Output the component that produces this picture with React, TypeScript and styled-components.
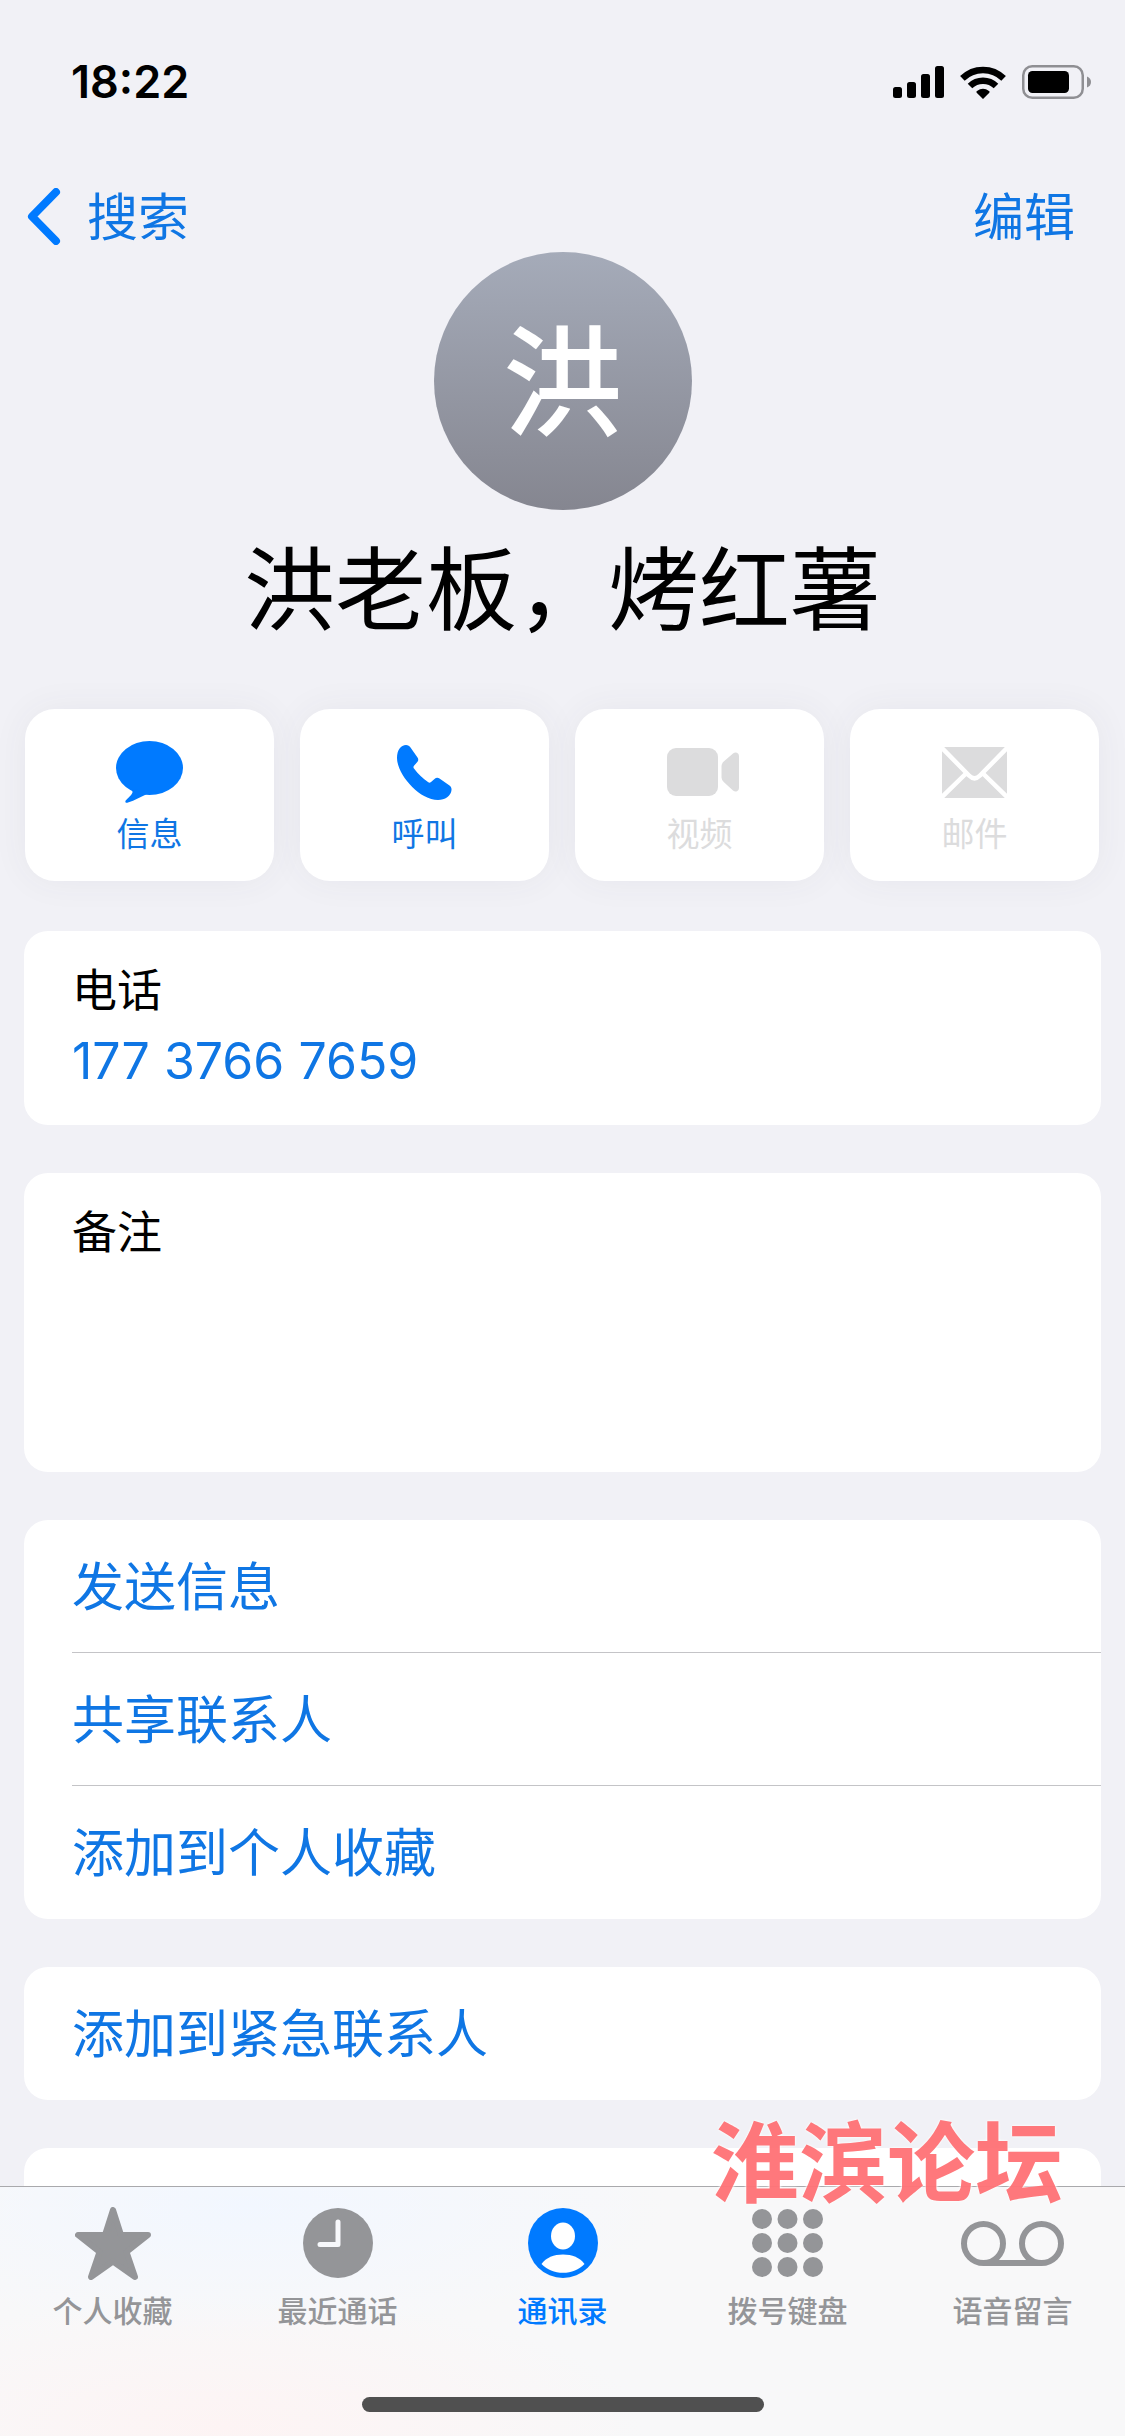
import React from "react";
import styled, { createGlobalStyle, css } from "styled-components";

const color = {
  page: "#f1f1f6",
  card: "#ffffff",
  tint: "#007aff",
  link: "#0f76e4",
  text: "#000000",
  disabled: "#dcdcdd",
  tab: "#949598",
  divider: "#c4c4c7",
};

const GlobalStyle = createGlobalStyle`
  *, *::before, *::after { box-sizing: border-box; }
  body {
    margin: 0;
    background: ${color.page};
    color: ${color.text};
    font-family: Inter, "Noto Sans CJK SC", sans-serif;
  }
  button, textarea { font: inherit; }
`;

const Screen = styled.div`
  display: flex;
  flex-direction: column;
  height: 100vh;
  overflow: hidden;
`;

const Scroller = styled.main`
  flex: 1;
  min-height: 0;
  overflow-y: auto;
  scrollbar-width: none;
`;

const StatusBar = styled.header`
  display: flex;
  align-items: center;
  justify-content: space-between;
  height: 132px;
  padding: 32px 34px 0 71px;
`;

const Clock = styled.time`
  font-size: 45px;
  font-weight: 600;
  line-height: 56px;
`;

const StatusIcons = styled.div`
  display: flex;
  align-items: center;
  gap: 16px;
`;

const NavBar = styled.nav`
  display: flex;
  justify-content: space-between;
  padding: 48px 50px 0 27px;
`;

const PlainButton = styled.button`
  padding: 0;
  border: 0;
  background: none;
  cursor: pointer;
`;

const NavButton = styled(PlainButton)`
  display: flex;
  align-items: center;
  gap: 25px;
  color: ${color.link};
  font-size: 51px;
  line-height: 68px;
`;

const NavText = styled.span`
  padding-top: 4px;
`;

const Profile = styled.section`
  display: flex;
  flex-direction: column;
  align-items: center;
  gap: 24px;
`;

const Avatar = styled.div`
  display: flex;
  justify-content: center;
  width: 258px;
  height: 258px;
  padding-top: 6px;
  border-radius: 50%;
  background: linear-gradient(#a5abb9, #858690);
  color: #fff;
  font-size: 120px;
  font-weight: 500;
  line-height: 252px;
`;

const Name = styled.h1`
  margin: 0;
  font-size: 91px;
  font-weight: 400;
  line-height: 112px;
`;

const Actions = styled.div`
  display: grid;
  grid-template-columns: repeat(4, 1fr);
  gap: 26px;
  padding: 63px 26px 50px 25px;
`;

const Action = styled(PlainButton)`
  display: flex;
  flex-direction: column;
  align-items: center;
  gap: 8px;
  height: 172px;
  padding-top: 31px;
  border-radius: 30px;
  background: ${color.card};
  box-shadow: 0 0 36px rgba(60, 60, 90, 0.06);
  color: ${color.link};
  font-size: 33px;
  line-height: 44px;
  svg { color: ${color.tint}; }
  &:disabled, &:disabled svg { color: ${color.disabled}; }
`;

const ActionIcon = styled.span`
  display: grid;
  place-items: center;
  height: 64px;
`;

const Cards = styled.div`
  display: flex;
  flex-direction: column;
  gap: 48px;
  padding: 0 24px 48px;
`;

const Card = styled.section`
  border-radius: 24px;
  background: ${color.card};
  overflow: hidden;
`;

const Field = styled.div`
  display: flex;
  flex-direction: column;
  gap: 2px;
  padding: 28px 48px;
`;

const fieldLabel = css`
  font-size: 45px;
  line-height: 64px;
`;

const FieldName = styled.span`
  ${fieldLabel}
`;

const NoteLabel = styled.label`
  ${fieldLabel}
`;

const PhoneLink = styled.a`
  color: ${color.link};
  font-size: 50px;
  line-height: 72px;
  text-decoration: none;
`;

const Note = styled.textarea`
  height: 177px;
  padding: 0;
  border: 0;
  outline: 0;
  resize: none;
  background: none;
  font-size: 45px;
`;

const Row = styled(PlainButton)`
  display: block;
  width: 100%;
  padding-left: 48px;
  color: ${color.link};
  font-size: 52px;
  line-height: 128px;
  text-align: left;
`;

const RowText = styled.span<{ $divided?: boolean }>`
  display: block;
  padding-top: 4px;
  border-bottom: 1px solid ${(p) => (p.$divided ? color.divider : "transparent")};
`;

const NextCard = styled(Card)`
  height: 133px;
`;

const Footer = styled.footer`
  position: relative;
  flex: none;
  height: 250px;
  border-top: 1px solid #a9a9ac;
  background:
    radial-gradient(ellipse 420px 130px at 22% 8%, #f2f7ff, transparent),
    radial-gradient(ellipse 420px 130px at 20% 96%, #fdf4f4, transparent),
    #f8f8f9;
`;

const TabBar = styled.nav`
  display: grid;
  grid-template-columns: repeat(5, 1fr);
  padding-top: 18px;
`;

const Tab = styled.a<{ $active?: boolean }>`
  display: flex;
  flex-direction: column;
  align-items: center;
  gap: 8px;
  color: ${(p) => (p.$active ? color.tint : color.tab)};
  font-size: 30px;
  font-weight: 500;
  line-height: 44px;
  text-decoration: none;
`;

const TabIcon = styled.span`
  display: grid;
  place-items: center;
  height: 76px;
`;

const HomeIndicator = styled.div`
  width: 402px;
  height: 15px;
  margin: 64px auto 0;
  border-radius: 8px;
  background: #505050;
`;

const Watermark = styled.div`
  position: absolute;
  top: -72px;
  right: 62px;
  color: #ff7377;
  font-size: 88px;
  font-weight: 700;
  line-height: 96px;
  text-shadow: 0 0 3px #fff, 0 0 3px #fff;
  opacity: 0.96;
  pointer-events: none;
`;

const Signal = () => (
  <svg width="51" height="32" viewBox="0 0 51 32" role="img" aria-label="信号">
    <rect x="0" y="21" width="9" height="11" rx="2.5" />
    <rect x="14" y="16" width="9" height="16" rx="2.5" />
    <rect x="28" y="8" width="9" height="24" rx="2.5" />
    <rect x="42" y="0" width="9" height="32" rx="2.5" />
  </svg>
);

const Wifi = () => (
  <svg width="46" height="33" viewBox="0 0 46 33" role="img" aria-label="Wi-Fi">
    <g fill="none" stroke="#000" strokeWidth="6.5">
      <path d="M2.4 12.4a29.3 29.3 0 0 1 41.2 0" />
      <path d="M10 20a18.6 18.6 0 0 1 26 0" />
    </g>
    <path d="M23 33l-6.3-6.3q-.9-1 .3-1.8a10 10 0 0 1 12 0q1.2.8.3 1.8z" />
  </svg>
);

const Battery = () => (
  <svg width="69" height="34" viewBox="0 0 69 34" role="img" aria-label="电池">
    <rect x="1.25" y="1.25" width="59.5" height="31.5" rx="9" fill="none" stroke="#8f8f93" strokeWidth="2.5" />
    <rect x="6" y="6" width="41" height="22" rx="4.5" />
    <path d="M65 11.5q4 1.5 4 5.5t-4 5.5z" fill="#8f8f93" />
  </svg>
);

const Chevron = () => (
  <svg width="35" height="57" viewBox="0 0 35 57" aria-hidden="true">
    <path d="M29 4L5 28.5L29 53" fill="none" stroke={color.tint} strokeWidth="8" strokeLinecap="round" strokeLinejoin="round" />
  </svg>
);

const MessageIcon = () => (
  <svg width="67" height="62" viewBox="0 0 67 62" fill="currentColor" aria-hidden="true">
    <ellipse cx="33.5" cy="27" rx="33.5" ry="27" />
    <path d="M14 48C19 51 16 53 9.7 59.5C8.7 61.3 10 62.3 12 61.5C19 59.5 25 55.5 29.5 53.8L36 50Z" />
  </svg>
);

const CallIcon = () => (
  <svg width="55" height="55" viewBox="0 0 55 55" fill="currentColor" aria-hidden="true">
    <path d="M0 13C0 5 4 0 9 0C11 0 12.5 1 13.5 2.5L20.5 12.5C21.5 14 21.5 15.5 20.5 16.8L17.2 20.5C16.3 21.6 16.2 22.5 17 23.5C21 29 26 33.5 31 37C32 38 33 38 34 37L37.5 34C39 32.5 41 32.5 42.5 33.5L52.5 40.5C54 41.5 54.7 43 54.5 45C54 51 48 55 41 55C22 55 0 29 0 13Z" />
  </svg>
);

const VideoIcon = () => (
  <svg width="78" height="48" viewBox="-6 0 78 48" fill="currentColor" aria-hidden="true">
    <rect width="51" height="48" rx="9" />
    <path d="M54.5 18Q54.5 15.5 57 13.3L66 5.5Q68 4 70 4.8Q72 5.5 72 8V40Q72 42.5 70 43.2Q68 44 66 42.5L57 34.3Q54.5 32 54.5 29.5Z" />
  </svg>
);

const MailIcon = () => (
  <svg width="65" height="51" viewBox="0 0 65 51" aria-hidden="true">
    <rect width="65" height="51" rx="2" fill="currentColor" />
    <path d="M-1 0L27 28.5Q32.5 34 38 28.5L66 0M-1 51L24 26.5M66 51L41 26.5" fill="none" stroke="#fff" strokeWidth="4.5" />
  </svg>
);

const StarIcon = () => (
  <svg width="76" height="73" viewBox="0 0 76 73" aria-hidden="true">
    <path d="M38 3L46 28H73L51.5 45L60 70L38 54.5L16 70L24.5 45L3 28H30Z" fill="currentColor" stroke="currentColor" strokeWidth="6" strokeLinejoin="round" />
  </svg>
);

const RecentIcon = () => (
  <svg width="70" height="70" viewBox="0 0 70 70" aria-hidden="true">
    <circle cx="35" cy="35" r="35" fill="currentColor" />
    <path d="M35 14V36.5H17" fill="none" stroke="#f7f8fb" strokeWidth="5" strokeLinecap="round" strokeLinejoin="round" />
  </svg>
);

const PersonIcon = () => (
  <svg width="70" height="70" viewBox="0 0 70 70" aria-hidden="true">
    <circle cx="35" cy="35" r="35" fill="currentColor" />
    <ellipse cx="35" cy="28" rx="12" ry="13.5" fill="#fff" />
    <path d="M13.5 56C18 49.5 26 46.5 35 46.5S52 49.5 56.5 56C51 61.5 43.5 64.8 35 64.8S19 61.5 13.5 56Z" fill="#fff" />
  </svg>
);

const KeypadIcon = () => (
  <svg width="71" height="68" viewBox="0 0 71 68" fill="currentColor" aria-hidden="true">
    {[10, 34, 58].map((y) =>
      [10, 35.5, 61].map((x) => <circle key={`${x}-${y}`} cx={x} cy={y} r="10" />)
    )}
  </svg>
);

const VoicemailIcon = () => (
  <svg width="103" height="45" viewBox="0 0 103 45" fill="none" stroke="currentColor" strokeWidth="6" aria-hidden="true">
    <circle cx="22.5" cy="22.5" r="19.5" />
    <circle cx="80.5" cy="22.5" r="19.5" />
    <path d="M22.5 42H80.5" />
  </svg>
);

const actions = [
  { label: "信息", icon: <MessageIcon /> },
  { label: "呼叫", icon: <CallIcon /> },
  { label: "视频", icon: <VideoIcon />, disabled: true },
  { label: "邮件", icon: <MailIcon />, disabled: true },
];

const groups = [["发送信息", "共享联系人", "添加到个人收藏"], ["添加到紧急联系人"]];

const tabs = [
  { label: "个人收藏", href: "#favorites", icon: <StarIcon /> },
  { label: "最近通话", href: "#recents", icon: <RecentIcon /> },
  { label: "通讯录", href: "#contacts", icon: <PersonIcon />, active: true },
  { label: "拨号键盘", href: "#keypad", icon: <KeypadIcon /> },
  { label: "语音留言", href: "#voicemail", icon: <VoicemailIcon /> },
];

export default function App() {
  return (
    <Screen>
      <GlobalStyle />
      <Scroller>
        <StatusBar>
          <Clock>18:22</Clock>
          <StatusIcons>
            <Signal />
            <Wifi />
            <Battery />
          </StatusIcons>
        </StatusBar>
        <NavBar>
          <NavButton type="button">
            <Chevron />
            <NavText>搜索</NavText>
          </NavButton>
          <NavButton type="button">
            <NavText>编辑</NavText>
          </NavButton>
        </NavBar>
        <Profile>
          <Avatar>洪</Avatar>
          <Name>洪老板，烤红薯</Name>
        </Profile>
        <Actions>
          {actions.map((a) => (
            <Action key={a.label} type="button" disabled={a.disabled}>
              <ActionIcon>{a.icon}</ActionIcon>
              {a.label}
            </Action>
          ))}
        </Actions>
        <Cards>
          <Card>
            <Field>
              <FieldName>电话</FieldName>
              <PhoneLink href="tel:17737667659">177 3766 7659</PhoneLink>
            </Field>
          </Card>
          <Card>
            <Field>
              <NoteLabel htmlFor="note">备注</NoteLabel>
              <Note id="note" />
            </Field>
          </Card>
          {groups.map((rows) => (
            <Card key={rows[0]}>
              {rows.map((text, i) => (
                <Row key={text} type="button">
                  <RowText $divided={i < rows.length - 1}>{text}</RowText>
                </Row>
              ))}
            </Card>
          ))}
          <NextCard />
        </Cards>
      </Scroller>
      <Footer>
        <TabBar>
          {tabs.map((t) => (
            <Tab key={t.label} href={t.href} $active={t.active} aria-current={t.active ? "page" : undefined}>
              <TabIcon>{t.icon}</TabIcon>
              {t.label}
            </Tab>
          ))}
        </TabBar>
        <HomeIndicator />
        <Watermark>淮滨论坛</Watermark>
      </Footer>
    </Screen>
  );
}
